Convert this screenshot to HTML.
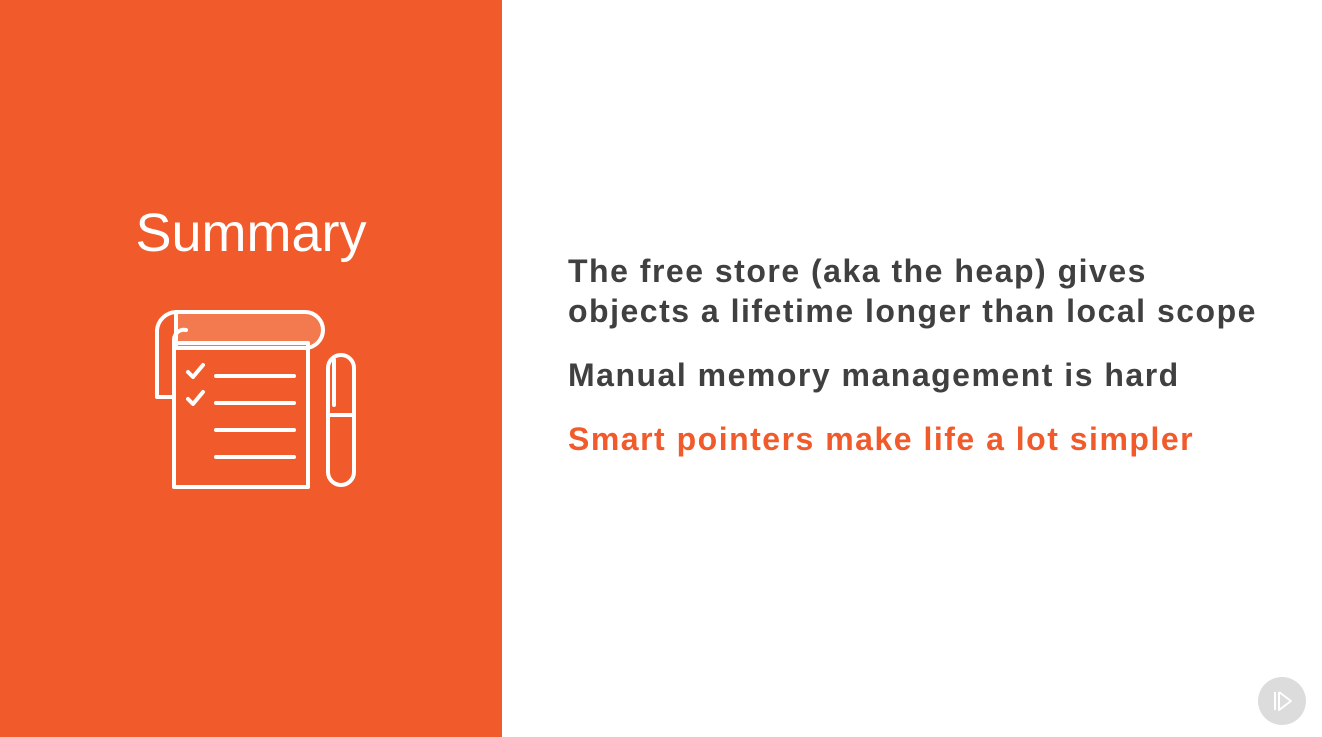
<!DOCTYPE html>
<html><head><style>
body{margin:0;width:1322px;height:737px;overflow:hidden;background:#fff;font-family:"Liberation Sans",sans-serif;position:relative}
.left{position:absolute;left:0;top:0;width:502px;height:737px;background:#f15a2b}
.title{position:absolute;left:0;width:502px;top:202px;text-align:center;color:#fff;font-size:54px;font-weight:300;letter-spacing:0px}
.t{position:absolute;left:568px;font-size:32px;font-weight:bold;color:#404040;line-height:40px;white-space:nowrap;letter-spacing:1.5px}
</style></head><body>
<div class="left"></div>
<div class="title">Summary</div>
<svg style="position:absolute;left:0;top:0" width="502" height="737">
<g fill="none" stroke="#fff" stroke-width="4" stroke-linejoin="round" stroke-linecap="round">
<path d="M176 312 H305 A18 18 0 0 1 305 348 H176 Z" fill="#f3794f"/>
<path d="M176 312 A20 20 0 0 0 157 330 V397 H174 V340 A10 10 0 0 1 186 330" />
<rect x="174" y="343" width="134" height="144"/>
<path d="M188 372 l5 5 l10 -12 M188 399 l5 5 l10 -12"/>
<path d="M216 376 H294 M216 403 H294 M216 430 H294 M216 457 H294"/>
<rect x="328" y="355" width="26" height="130" rx="13"/>
<path d="M328 415 H354 M334 360 V405"/>
</g>
</svg>
<div class="t" style="top:251px">The free store (aka the heap) gives<br>objects a lifetime longer than local scope</div>
<div class="t" style="top:355px">Manual memory management is hard</div>
<div class="t" style="top:419px;color:#f15a2b">Smart pointers make life a lot simpler</div>
<svg style="position:absolute;left:1258px;top:677px" width="48" height="48">
<circle cx="24" cy="24" r="24" fill="#dcdcdc"/>
<path d="M17 15 V33 M21 15 V33 L33 24 L21 15" fill="none" stroke="#fff" stroke-width="2" stroke-linejoin="round"/>
</svg>
</body></html>
